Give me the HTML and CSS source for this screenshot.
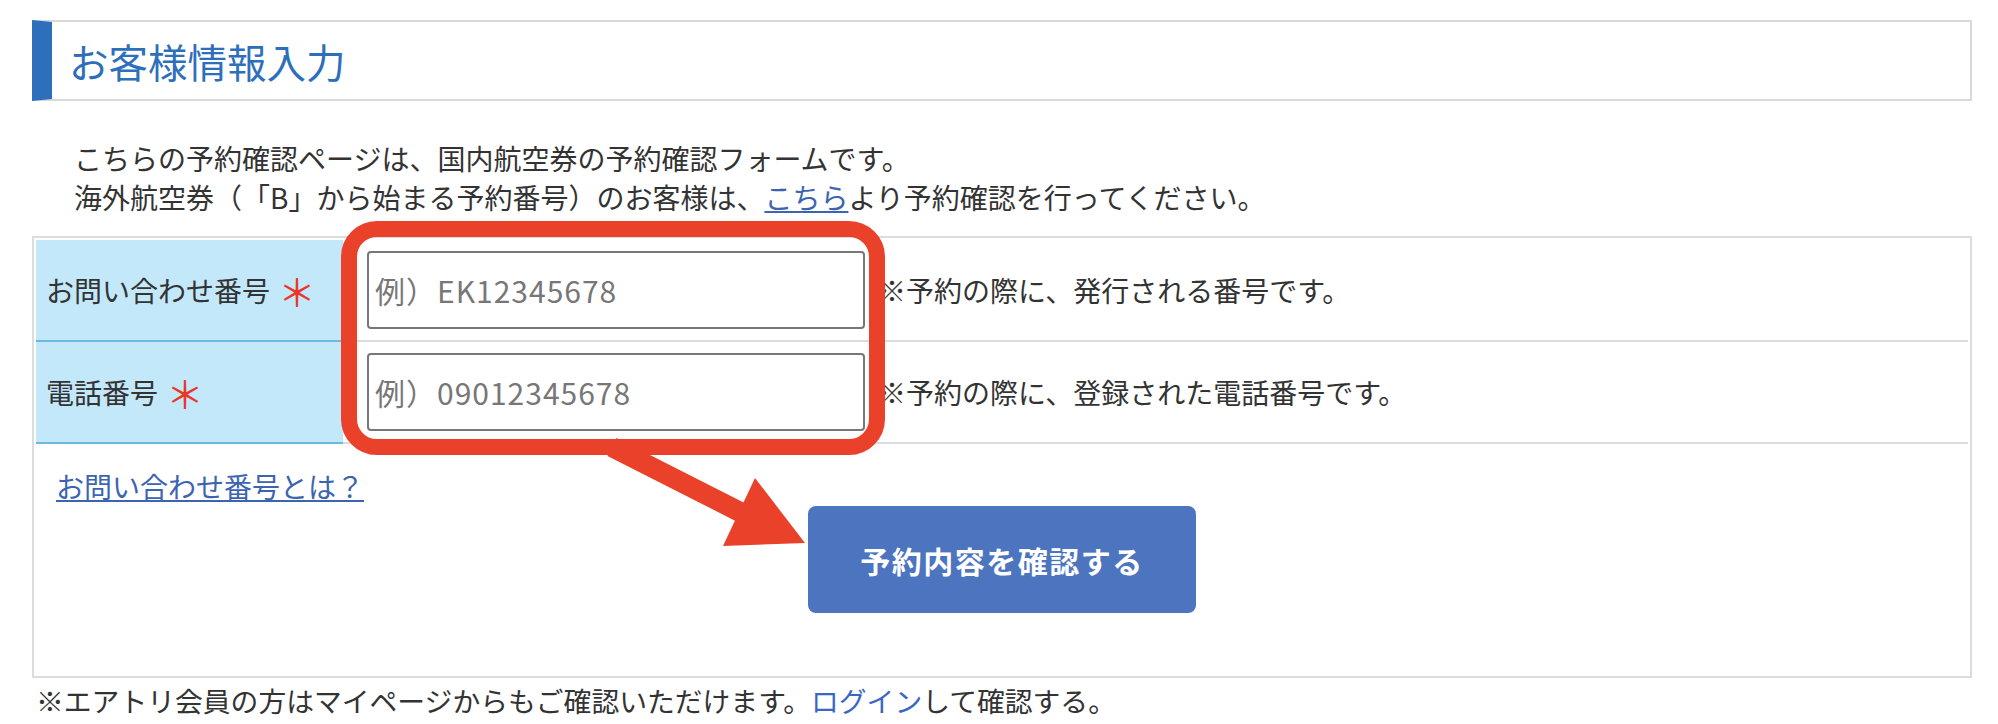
FILE: index.html
```html
<!DOCTYPE html>
<html lang="ja">
<head>
  <meta charset="UTF-8">
  <meta name="viewport" content="width=device-width, initial-scale=1.0">
  <title>お客様情報入力</title>
  <link rel="stylesheet" href="styles.css">
</head>
<body>
  <div class="page">
    <h2 class="heading">お客様情報入力</h2>

    <p class="intro">
      こちらの予約確認ページは、国内航空券の予約確認フォームです。<br>
      海外航空券（「B」から始まる予約番号）のお客様は、<a href="#">こちら</a>より予約確認を行ってください。
    </p>

    <div class="form">
      <div class="row">
        <div class="label">お問い合わせ番号<span class="req">＊</span></div>
        <div class="field">
          <input class="input" type="text" placeholder="例）EK12345678">
          <span class="hint">※予約の際に、発行される番号です。</span>
        </div>
      </div>
      <div class="row">
        <div class="label">電話番号<span class="req">＊</span></div>
        <div class="field">
          <input class="input" type="text" placeholder="例）09012345678">
          <span class="hint">※予約の際に、登録された電話番号です。</span>
        </div>
      </div>
      <div class="actions">
        <a class="help" href="#">お問い合わせ番号とは？</a>
        <button class="submit" type="button">予約内容を確認する</button>
      </div>
    </div>

    <p class="note">※エアトリ会員の方はマイページからもご確認いただけます。<a href="#">ログイン</a>して確認する。</p>
  </div>

  <!-- red annotation drawn over the form -->
  <svg class="annotation" width="1998" height="724" viewBox="0 0 1998 724">
    <line x1="612" y1="447" x2="742" y2="513" stroke="#e9412a" stroke-width="20"/>
    <polygon points="755,478 723,546 805,543" fill="#e9412a"/>
    <rect x="349" y="229" width="528" height="218" rx="28" fill="none" stroke="#e9412a" stroke-width="16"/>
  </svg>
</body>
</html>
```

FILE: styles.css
```css
body {
  margin: 0;
  position: relative;
  font-family: "Noto Sans CJK JP", "Noto Sans", sans-serif;
  color: #333;
  background: #fff;
  text-spacing-trim: space-all;
}
.page { padding: 20px 26px 0 32px; }

.heading {
  margin: 0;
  height: 77px;
  line-height: 77px;
  border: 2px solid #d9d9d9;
  border-left: 20px solid #2d6fba;
  padding-left: 17px;
  font-size: 39.5px;
  font-weight: normal;
  color: #2d6fba;
}

.intro {
  margin: 38px 0 0;
  padding-left: 42px;
  font-size: 28px;
  line-height: 39px;
}
.intro a { color: #3c64b1; }

.form {
  margin-top: 19px;
  border: 2px solid #dcdcdc;
  padding: 2px;
}
.row { display: flex; height: 102px; }
.label {
  width: 297px;
  padding-left: 10px;
  display: flex;
  align-items: center;
  background: #c2e8fa;
  border-bottom: 2px solid #6bbbe0;
  font-size: 28px;
}
.req {
  color: #e8382a;
  font-size: 38px;
  margin-left: 8px;
}
.field {
  flex: 1;
  display: flex;
  align-items: center;
  padding-left: 24px;
  border-bottom: 2px solid #dcdcdc;
}
.input {
  box-sizing: border-box;
  width: 498px;
  height: 78px;
  padding: 0 6px;
  border: 2px solid #777;
  border-radius: 4px;
  font-family: inherit;
  font-size: 30px;
  letter-spacing: 1px;
  color: #333;
}
.input::placeholder { color: #777; }
.hint {
  margin-left: 13px;
  font-size: 28px;
}

.actions {
  height: 230px;
  box-sizing: border-box;
  padding: 23px 20px 0;
}
.help {
  display: block;
  width: max-content;
  font-size: 28px;
  line-height: 39px;
  color: #3c64b1;
}
.submit {
  display: block;
  margin: 0 auto;
  width: 388px;
  height: 107px;
  border: none;
  border-radius: 8px;
  background: #4d74bf;
  color: #fff;
  font-family: inherit;
  font-size: 30px;
  font-weight: bold;
  letter-spacing: 1.5px;
  cursor: pointer;
}

.note {
  margin: 3px 0 0 4px;
  font-size: 27.8px;
  line-height: 39px;
}
.note a { color: #3a66c4; text-decoration: none; }

.annotation {
  position: absolute;
  top: 0;
  left: 0;
  pointer-events: none;
}
```
